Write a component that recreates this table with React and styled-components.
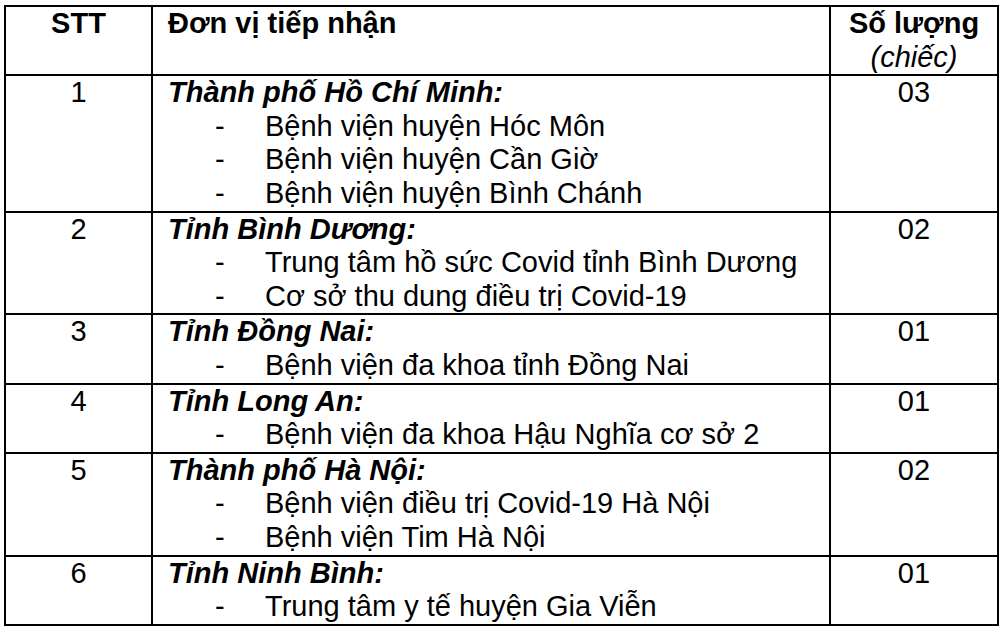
import React from "react";
import styled, { createGlobalStyle } from "styled-components";

const GlobalStyle = createGlobalStyle`
  html, body {
    margin: 0;
    padding: 0;
    background: #ffffff;
  }
  body {
    font-family: "Liberation Sans", Arial, Helvetica, sans-serif;
    color: #000000;
  }
`;

const Page = styled.div`
  padding: 5px 3px 0 4px;
  width: 1000px;
  height: 632px;
  box-sizing: border-box;
  overflow: hidden;
`;

const Table = styled.table`
  width: 993px;
  border-collapse: collapse;
  table-layout: fixed;
  font-size: 29px;
  line-height: 33.6px;
`;

const Cell = styled.td`
  border: 2px solid #000000;
  padding: 0;
  vertical-align: top;
  text-align: ${(p) => (p.$center ? "center" : "left")};
  padding-left: ${(p) => (p.$center ? "0" : "15px")};
  font-weight: ${(p) => (p.$bold ? "bold" : "normal")};
`;

const Region = styled.div`
  font-weight: bold;
  font-style: italic;
`;

const Unit = styled.div`
  font-style: italic;
  font-weight: normal;
`;

const Item = styled.div`
  display: flex;
  white-space: nowrap;
`;

const Dash = styled.span`
  width: 50px;
  margin-left: 47px;
  flex: none;
`;

const rows = [
  {
    stt: "1",
    region: "Thành phố Hồ Chí Minh:",
    items: [
      "Bệnh viện huyện Hóc Môn",
      "Bệnh viện huyện Cần Giờ",
      "Bệnh viện huyện Bình Chánh",
    ],
    qty: "03",
  },
  {
    stt: "2",
    region: "Tỉnh Bình Dương:",
    items: ["Trung tâm hồ sức Covid tỉnh Bình Dương", "Cơ sở thu dung điều trị Covid-19"],
    qty: "02",
  },
  {
    stt: "3",
    region: "Tỉnh Đồng Nai:",
    items: ["Bệnh viện đa khoa tỉnh Đồng Nai"],
    qty: "01",
  },
  {
    stt: "4",
    region: "Tỉnh Long An:",
    items: ["Bệnh viện đa khoa Hậu Nghĩa cơ sở 2"],
    qty: "01",
  },
  {
    stt: "5",
    region: "Thành phố Hà Nội:",
    items: ["Bệnh viện điều trị Covid-19 Hà Nội", "Bệnh viện Tim Hà Nội"],
    qty: "02",
  },
  {
    stt: "6",
    region: "Tỉnh Ninh Bình:",
    items: ["Trung tâm y tế huyện Gia Viễn"],
    qty: "01",
  },
];

export default function App() {
  return (
    <Page>
      <GlobalStyle />
      <Table>
        <colgroup>
          <col style={{ width: 147 }} />
          <col style={{ width: 678 }} />
          <col style={{ width: 168 }} />
        </colgroup>
        <thead>
          <tr>
            <Cell as="th" $center $bold>
              STT
            </Cell>
            <Cell as="th" $bold>
              Đơn vị tiếp nhận
            </Cell>
            <Cell as="th" $center $bold>
              Số lượng
              <Unit>(chiếc)</Unit>
            </Cell>
          </tr>
        </thead>
        <tbody>
          {rows.map((r) => (
            <tr key={r.stt}>
              <Cell $center>{r.stt}</Cell>
              <Cell>
                <Region>{r.region}</Region>
                {r.items.map((it) => (
                  <Item key={it}>
                    <Dash>-</Dash>
                    {it}
                  </Item>
                ))}
              </Cell>
              <Cell $center>{r.qty}</Cell>
            </tr>
          ))}
        </tbody>
      </Table>
    </Page>
  );
}
